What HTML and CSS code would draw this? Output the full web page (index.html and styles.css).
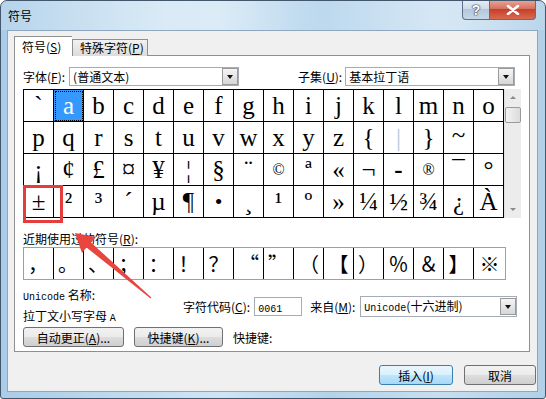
FILE: index.html
```html
<!DOCTYPE html>
<html lang="zh">
<head>
<meta charset="utf-8">
<title>符号</title>
<link rel="stylesheet" href="styles.css">
</head>
<body>
<div class="window">
  <div class="titlebar">
    <span class="title">符号</span>
    <div class="caption-btns">
      <div class="cap help">?</div>
      <div class="cap close">
        <svg width="14" height="10" viewBox="0 0 14 10"><path d="M2 1 L12 9 M12 1 L2 9" stroke="#fff" stroke-width="2.6" stroke-linecap="round"/></svg>
      </div>
    </div>
  </div>
  <div class="client">
    <div class="tabs">
      <div class="tab active">符号(<u>S</u>)</div>
      <div class="tab">特殊字符(<u>P</u>)</div>
    </div>
    <div class="panel">
      <div class="font-row">
        <span class="lbl">字体(<u>F</u>):</span>
        <div class="combo combo-font"><span class="combo-text">(普通文本)</span><span class="drop"></span></div>
        <span class="lbl lbl-subset">子集(<u>U</u>):</span>
        <div class="combo combo-subset"><span class="combo-text">基本拉丁语</span><span class="drop"></span></div>
      </div>
      <div class="grid-wrap">
        <div class="grid">
          <div class="c">`</div><div class="c sel">a</div><div class="c">b</div><div class="c">c</div><div class="c">d</div><div class="c">e</div><div class="c">f</div><div class="c">g</div><div class="c">h</div><div class="c">i</div><div class="c">j</div><div class="c">k</div><div class="c">l</div><div class="c">m</div><div class="c">n</div><div class="c">o</div>
          <div class="c">p</div><div class="c">q</div><div class="c">r</div><div class="c">s</div><div class="c">t</div><div class="c">u</div><div class="c">v</div><div class="c">w</div><div class="c">x</div><div class="c">y</div><div class="c">z</div><div class="c">{</div><div class="c pipe">|</div><div class="c">}</div><div class="c tilde">~</div><div class="c"></div>
          <div class="c">¡</div><div class="c">¢</div><div class="c">£</div><div class="c big">¤</div><div class="c">¥</div><div class="c">¦</div><div class="c">§</div><div class="c">¨</div><div class="c sm">©</div><div class="c">ª</div><div class="c">«</div><div class="c">¬</div><div class="c shy">-</div><div class="c sm">®</div><div class="c">¯</div><div class="c">°</div>
          <div class="c">±</div><div class="c">²</div><div class="c">³</div><div class="c">´</div><div class="c">µ</div><div class="c">¶</div><div class="c dot">•</div><div class="c">¸</div><div class="c">¹</div><div class="c">º</div><div class="c">»</div><div class="c">¼</div><div class="c">½</div><div class="c">¾</div><div class="c">¿</div><div class="c">À</div>
        </div>
        <div class="scrollbar">
          <div class="sb-arrow up"></div>
          <div class="sb-thumb"></div>
          <div class="sb-track"></div>
          <div class="sb-arrow down"></div>
        </div>
      </div>
      <div class="recent-label">近期使用过的符号(<u>R</u>):</div>
      <div class="recent">
        <div class="r left">，</div><div class="r left">。</div><div class="r left">、</div><div class="r">；</div><div class="r">：</div><div class="r">！</div><div class="r">？</div><div class="r right">“</div><div class="r left">”</div><div class="r right">（</div><div class="r">【</div><div class="r left">）</div><div class="r">％</div><div class="r">＆</div><div class="r">】</div><div class="r last">※</div>
      </div>
      <div class="info-row">
        <div class="uni">
          <div class="uni-name"><span class="mono">Unicode</span> 名称:</div>
          <div class="uni-val">拉丁文小写字母 <span class="mono">A</span></div>
        </div>
        <span class="lbl lbl-code">字符代码(<u>C</u>):</span>
        <div class="input"><span class="mono">0061</span></div>
        <span class="lbl lbl-from">来自(<u>M</u>):</span>
        <div class="combo combo-from"><span class="combo-text"><span class="mono">Unicode</span>(十六进制)</span><span class="drop"></span></div>
      </div>
      <div class="btn-row">
        <div class="btn btn-auto">自动更正(<u>A</u>)...</div>
        <div class="btn btn-key">快捷键(<u>K</u>)...</div>
        <span class="lbl">快捷键:</span>
      </div>
    </div>
    <div class="footer">
      <div class="btn btn-ok">插入(<u>I</u>)</div>
      <div class="btn btn-cancel">取消</div>
    </div>
  </div>
  <svg class="annot" width="546" height="399" viewBox="0 0 546 399">
    <rect x="23.5" y="185.5" width="37" height="35" fill="none" stroke="#e53c3c" stroke-width="3"/>
    <polygon points="74,232 95,236 90,241.5 150.4,296.6 149.6,297.4 85.5,246.5 81,252" fill="#e8453f"/>
  </svg>
</div>
</body>
</html>
```

FILE: styles.css
```css
* { box-sizing: border-box; }
html, body { margin: 0; padding: 0; background: #fff; }
body {
  font-family: "Noto Sans CJK SC", "Liberation Sans", sans-serif;
  font-size: 12px;
  color: #000;
}
u { text-decoration: underline; text-underline-offset: 1px; }
.mono { font-family: "Liberation Mono", monospace; font-size: 10px; }

.window {
  width: 546px;
  height: 399px;
  border: 1px solid #42566c;
  border-radius: 7px 7px 3px 3px;
  background: linear-gradient(90deg, #a9cce8 0%, #bcd9ee 20%, #cfe5f4 40%, #b3d3eb 60%, #c6def1 80%, #b1d0e8 100%);
  padding: 0 7px 6px 6px;
  position: relative;
  overflow: hidden;
}
.titlebar {
  height: 29px;
  display: flex;
  justify-content: space-between;
  align-items: flex-start;
  background: linear-gradient(90deg, rgba(255,255,255,0.15) 0%, rgba(255,255,255,0.35) 30%, rgba(255,255,255,0.1) 55%, rgba(255,255,255,0.3) 85%, rgba(255,255,255,0.1) 100%);
  margin: 0 -7px 0 -6px;
  padding: 0 9px 0 7px;
}
.title { font-size: 12px; line-height: 29px; color: #000; }
.caption-btns { display: flex; margin-top: -1px; }
.cap {
  height: 20px;
  display: flex; align-items: center; justify-content: center;
  border: 1px solid #5c6f86;
  border-top: none;
}
.help {
  width: 28px;
  border-radius: 0 0 0 4px;
  background: linear-gradient(180deg, #e4eef6 0%, #cddceb 45%, #b2c8dc 50%, #c5d8e8 100%);
  color: #fff;
  font-family: "Liberation Sans", sans-serif;
  font-weight: bold;
  font-size: 14px;
  text-shadow: 0 0 1px #334, 0 0 1px #334, 0 0 2px #556;
}
.close {
  width: 46px;
  border-left: none;
  border-radius: 0 0 4px 0;
  background: linear-gradient(180deg, #e9a99a 0%, #d7715f 45%, #c7402a 50%, #d86a4f 100%);
}

.client {
  background: #f0f0f0;
  border: 1px solid #8ea7bf;
  height: 362px;
  padding: 5px 0 0 6px;
}
.tabs { display: flex; align-items: flex-end; height: 20px; position: relative; z-index: 2; }
.tab {
  height: 17px;
  padding: 0 6px;
  border: 1px solid #8e8f8f;
  border-bottom: none;
  background: linear-gradient(180deg, #f2f2f2, #dcdcdc);
  line-height: 16px;
  white-space: nowrap;
}
.tab.active {
  width: 58px;
  height: 20px;
  background: #fff;
  border-right: none;
  padding-left: 7px;
  line-height: 19px;
}
.tab:not(.active) { width: 76px; padding-left: 7px; }

.panel {
  width: 516px;
  height: 297px;
  margin-top: -1px;
  border: 1px solid #8e8f8f;
  background: #fff;
  padding: 0 0 0 8px;
  position: relative;
}
.font-row {
  display: flex;
  align-items: center;
  height: 19px;
  margin-top: 11px;
}
.lbl { white-space: nowrap; }
.combo {
  height: 19px;
  border: 1px solid #a5acb5;
  background: #fff;
  display: flex;
  align-items: center;
  justify-content: space-between;
  padding-left: 3px;
}
.combo-font { width: 170px; margin-left: 4px; }
.lbl-subset { margin-left: 59px; }
.combo-subset { width: 170px; margin-left: 3px; }
.combo-text { white-space: nowrap; line-height: 17px; }
.drop {
  width: 16px;
  height: 17px;
  border: 1px solid #9a9a9a;
  background: linear-gradient(180deg, #f4f4f4 0%, #e6e6e6 50%, #d6d6d6 100%);
  position: relative;
}
.drop::after {
  content: "";
  position: absolute;
  left: 4px; top: 6px;
  border-left: 3.5px solid transparent;
  border-right: 3.5px solid transparent;
  border-top: 4px solid #111;
}

.grid-wrap { display: flex; margin-top: 3px; }
.grid {
  display: grid;
  grid-template-columns: repeat(16, 30px);
  grid-auto-rows: 32px;
  border-top: 1px solid #000;
  border-left: 1px solid #000;
  width: 481px;
}
.c {
  border-right: 1px solid #000;
  border-bottom: 1px solid #000;
  font-family: "Liberation Serif", serif;
  font-size: 25px;
  line-height: 31px;
  text-align: center;
  overflow: hidden;
}
.c.sel {
  background: #3399ff;
  color: #fff;
  outline: 1px dotted #000;
  outline-offset: -2px;
  border-right-color: #000;
}
.c.sm { font-size: 16px; }
.c.big { font-size: 27px; }
.c.pipe { color: #b5c9da; }
.c.tilde { line-height: 26px; }
.c.shy { font-weight: bold; }
.c.dot { font-size: 22px; }

.scrollbar {
  width: 17px;
  height: 129px;
  background: #ececec;
  display: flex;
  flex-direction: column;
  border-left: 1px solid #e0e0e0;
}
.sb-arrow { height: 17px; position: relative; }
.sb-arrow::after {
  content: "";
  position: absolute;
  left: 5px;
  border-left: 3px solid transparent;
  border-right: 3px solid transparent;
}
.sb-arrow.up::after { top: 7px; border-bottom: 3px solid #8a8a8a; }
.sb-arrow.down::after { top: 7px; border-top: 3px solid #8a8a8a; }
.sb-thumb {
  height: 16px;
  margin: 1px 0 0 0;
  border: 1px solid #9b9b9b;
  border-radius: 2px;
  background: linear-gradient(90deg, #f3f3f3, #dcdcdc);
}
.sb-track { flex: 1; }

.recent-label { margin-top: 12px; line-height: 17px; height: 17px; }
.recent {
  display: grid;
  grid-template-columns: repeat(15, 30px) 31px;
  height: 33px;
  width: 483px;
  border: 1px solid #a0a0a0;
}
.r {
  border-right: 1px solid #000;
  font-size: 20px;
  line-height: 31px;
  text-align: center;
  font-family: "Noto Sans CJK SC", sans-serif;
}
.r.last { border-right: none; }
.r.left { text-align: left; padding-left: 4px; }
.r.right { text-align: right; padding-right: 4px; }

.info-row {
  display: flex;
  align-items: center;
  margin-top: 8px;
  height: 37px;
}
.uni { width: 160px; line-height: 18px; }
.lbl-code { margin-left: 0; }
.input {
  width: 48px;
  height: 19px;
  border: 1px solid #a5acb5;
  margin-left: 4px;
  padding-left: 3px;
  line-height: 17px;
  background: #fff;
}
.lbl-from { margin-left: 8px; }
.combo-from { width: 157px; margin-left: 5px; height: 21px; }

.btn-row {
  display: flex;
  align-items: center;
  margin-top: 2px;
  height: 20px;
}
.btn {
  height: 20px;
  border: 1px solid #707070;
  border-radius: 3px;
  background: linear-gradient(180deg, #f2f2f2 0%, #ebebeb 50%, #dddddd 51%, #cfcfcf 100%);
  display: flex;
  align-items: center;
  justify-content: center;
  white-space: nowrap;
}
.btn-auto { width: 101px; }
.btn-key { width: 89px; margin-left: 10px; }
.btn-row .lbl { margin-left: 10px; }

.footer {
  display: flex;
  justify-content: flex-end;
  gap: 11px;
  width: 522px;
  margin-top: 13px;
}
.btn-ok {
  width: 74px;
  border-color: #3c7fb1;
  background: linear-gradient(180deg, #eaf6fd 0%, #d9f0fc 50%, #bee6fd 51%, #a7d9f5 100%);
}
.btn-cancel { width: 72px; }

.annot { position: absolute; left: 0; top: 0; pointer-events: none; }
```
